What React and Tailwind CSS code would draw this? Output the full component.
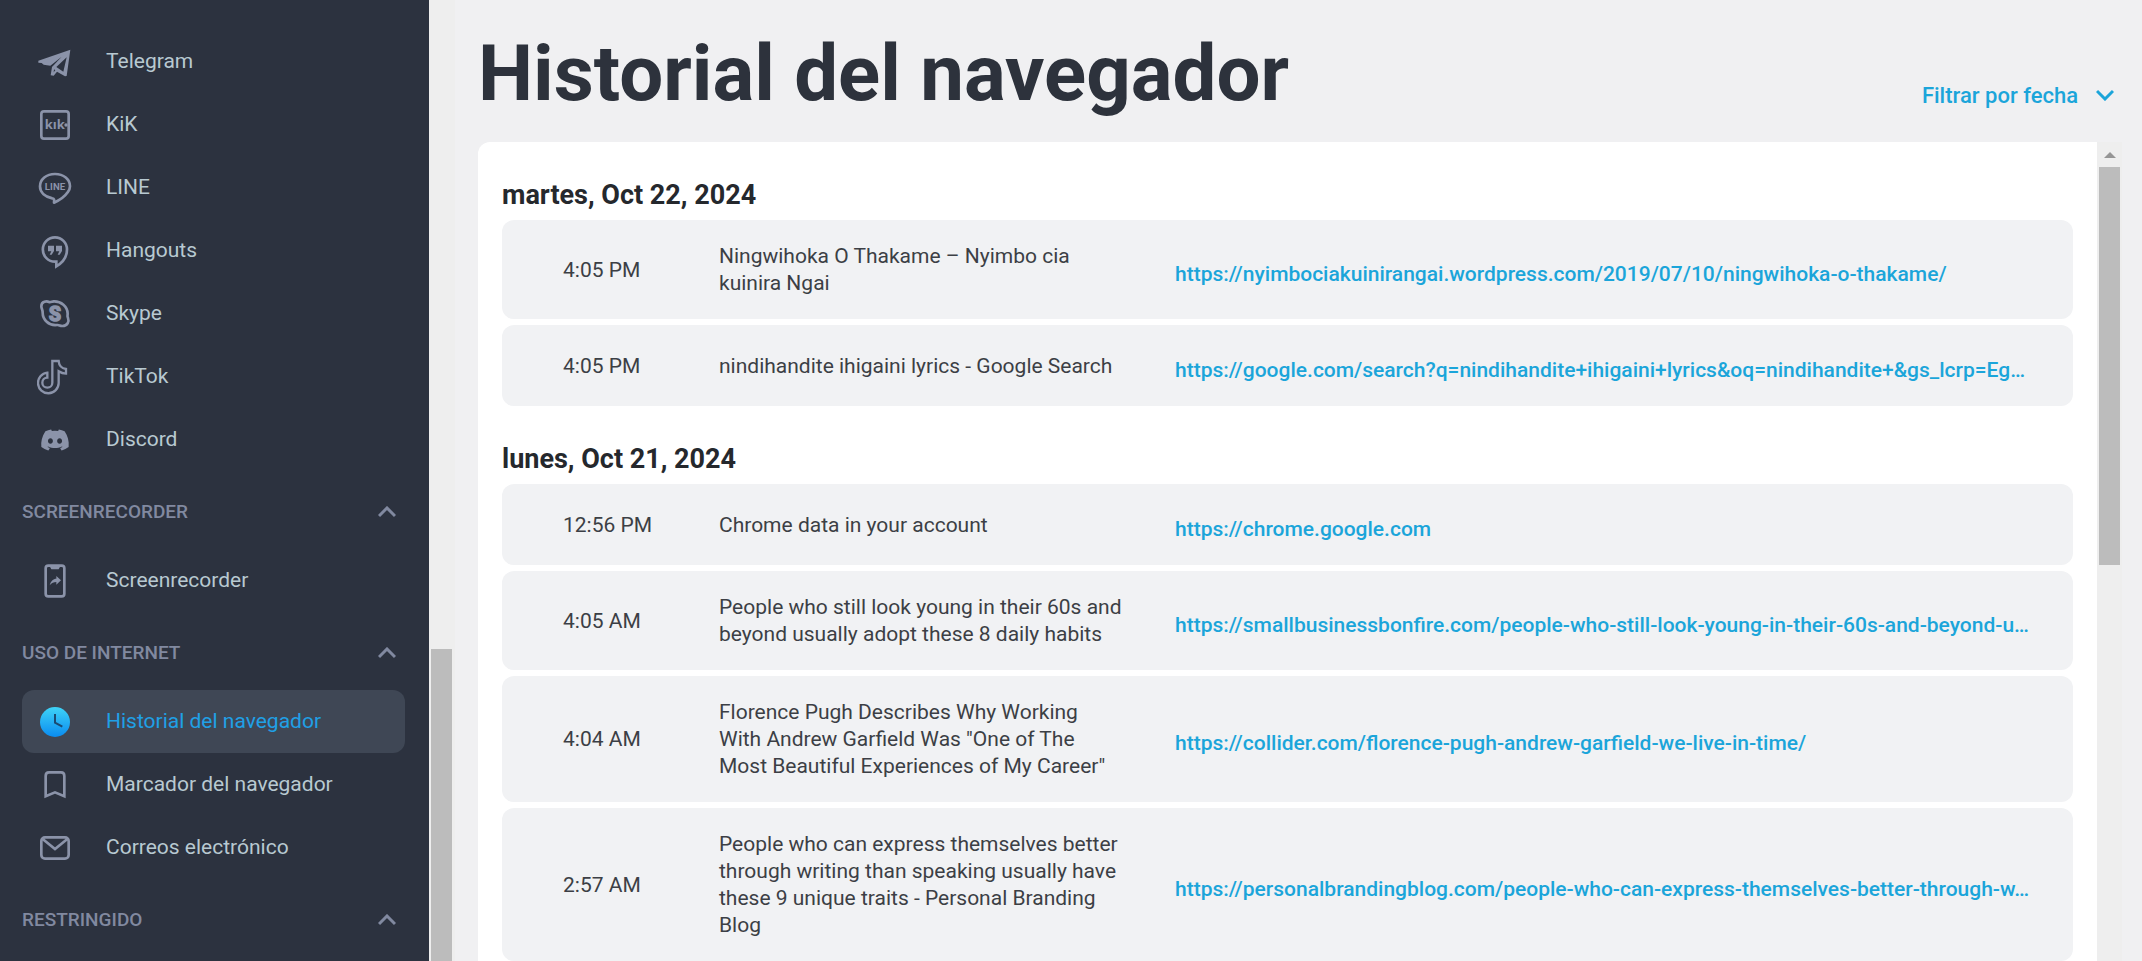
import React from "react";
import { FaDiscord } from "react-icons/fa";

const line = { fill: "none", stroke: "currentColor" };

function Glyph({ children }) {
  return (
    <svg viewBox="0 0 108 108" className="size-9 shrink-0" aria-hidden="true">
      {children}
    </svg>
  );
}

const icons = {
  telegram: (
    <Glyph>
      <path
        fill="currentColor"
        fillRule="evenodd"
        d="M100 17 4 50l0 6 10 1 6 5 20 3L74 38 45 69l-4 25 9 1 10-12 24 14 5-1zM89 40 79 83 58 69z"
      />
      <path fill="#2c323f" d="m51 76 4 3-5 6z" />
    </Glyph>
  ),
  kik: (
    <Glyph>
      <rect x="13" y="13" width="82" height="82" rx="8" strokeWidth="8" {...line} />
      <text x="23" y="67" fill="currentColor" fontFamily="Open Sans, sans-serif" fontWeight="700" fontSize="39">
        kık
      </text>
      <circle cx="87" cy="54" r="5" fill="currentColor" />
    </Glyph>
  ),
  line: (
    <Glyph>
      <path
        strokeWidth="8"
        strokeLinejoin="round"
        {...line}
        d="M54 12c-26 0-45 16-45 37 0 19 16 32 37 36 6 1 6 3 5 13 14-6 33-19 41-31 5-6 7-12 7-18 0-21-19-37-45-37z"
      />
      <text x="54" y="60" textAnchor="middle" fill="currentColor" fontFamily="Roboto, sans-serif" fontWeight="700" fontSize="29">
        LINE
      </text>
    </Glyph>
  ),
  hangouts: (
    <Glyph>
      <path
        strokeWidth="8"
        {...line}
        d="M54 13a36 36 0 0 0 0 73h4v14c19-11 32-29 32-51a36 36 0 0 0-36-36z"
      />
      <path fill="currentColor" d="M33 38h18v16l-7 11h-6l5-10H33zM57 38h18v16l-7 11h-6l5-10H57z" />
    </Glyph>
  ),
  skype: (
    <Glyph>
      <path
        strokeWidth="8"
        {...line}
        d="M36 18c-6-3-23-3-23 13 0 7 4 10 4 19 0 20 18 40 43 37 7-1 8 3 16 3 16 0 21-14 17-24-3-6-1-7-1-13 0-21-20-38-42-37-6 1-10 4-14 2z"
      />
      <text x="54" y="74" textAnchor="middle" fill="currentColor" stroke="currentColor" strokeWidth="5" fontFamily="Roboto, sans-serif" fontWeight="700" fontSize="58">
        S
      </text>
    </Glyph>
  ),
  tiktok: (
    <Glyph>
      <path
        strokeWidth="7"
        {...line}
        d="M46 6h19c1 14 9 22 22 24v14c-9 0-16-3-22-7v35a31 31 0 1 1-34-31v15a15 15 0 1 0 15 15z"
      />
    </Glyph>
  ),
  discord: (
    <span className="flex size-9 shrink-0 items-center justify-center">
      <FaDiscord className="size-[30px]" aria-hidden="true" />
    </span>
  ),
  recorder: (
    <Glyph>
      <rect x="26" y="8" width="56" height="92" rx="8" strokeWidth="8" {...line} />
      <path fill="currentColor" d="M38 10h32l-5 9H43zM38 67c3-13 11-20 20-20v-8l14 13-14 13v-8c-8 0-14 3-20 10z" />
    </Glyph>
  ),
  bookmark: (
    <Glyph>
      <path strokeWidth="8" {...line} d="M26 88V27c0-8 3-11 10-11h36c7 0 10 3 10 11v61L54 76z" />
    </Glyph>
  ),
  mail: (
    <Glyph>
      <rect x="13" y="22" width="82" height="64" rx="11" strokeWidth="8" {...line} />
      <path strokeWidth="8" {...line} d="m16 26 38 31 38-31" />
    </Glyph>
  ),
  clock: (
    <Glyph>
      <defs>
        <linearGradient id="clock-fill" x1="0" y1="0" x2="0" y2="1">
          <stop offset="0" stopColor="#3fd3f7" />
          <stop offset="1" stopColor="#0a8cf0" />
        </linearGradient>
      </defs>
      <circle cx="54" cy="54" r="45" fill="url(#clock-fill)" />
      <path d="M54 30v26l22 12" fill="none" stroke="#1b4a72" strokeWidth="6" />
    </Glyph>
  ),
};

const sections = [
  {
    items: [
      ["telegram", "Telegram"],
      ["kik", "KiK"],
      ["line", "LINE"],
      ["hangouts", "Hangouts"],
      ["skype", "Skype"],
      ["tiktok", "TikTok"],
      ["discord", "Discord"],
    ],
  },
  { title: "SCREENRECORDER", items: [["recorder", "Screenrecorder"]] },
  {
    title: "USO DE INTERNET",
    items: [
      ["clock", "Historial del navegador"],
      ["bookmark", "Marcador del navegador"],
      ["mail", "Correos electrónico"],
    ],
  },
  { title: "RESTRINGIDO", items: [] },
];

const days = [
  {
    date: "martes, Oct 22, 2024",
    visits: [
      ["4:05 PM", "Ningwihoka O Thakame – Nyimbo cia kuinira Ngai", "https://nyimbociakuinirangai.wordpress.com/2019/07/10/ningwihoka-o-thakame/"],
      ["4:05 PM", "nindihandite ihigaini lyrics - Google Search", "https://google.com/search?q=nindihandite+ihigaini+lyrics&oq=nindihandite+&gs_lcrp=Eg…"],
    ],
  },
  {
    date: "lunes, Oct 21, 2024",
    visits: [
      ["12:56 PM", "Chrome data in your account", "https://chrome.google.com"],
      ["4:05 AM", "People who still look young in their 60s and beyond usually adopt these 8 daily habits", "https://smallbusinessbonfire.com/people-who-still-look-young-in-their-60s-and-beyond-u…"],
      ["4:04 AM", 'Florence Pugh Describes Why Working With Andrew Garfield Was "One of The Most Beautiful Experiences of My Career"', "https://collider.com/florence-pugh-andrew-garfield-we-live-in-time/"],
      ["2:57 AM", "People who can express themselves better through writing than speaking usually have these 9 unique traits - Personal Branding Blog", "https://personalbrandingblog.com/people-who-can-express-themselves-better-through-w…"],
    ],
  },
];

function Chevron({ up }) {
  return (
    <svg viewBox="0 0 18 12" className="h-3 w-[18px] shrink-0" fill="none" stroke="currentColor" strokeWidth="3" aria-hidden="true">
      <path d={up ? "m1 10 8-8 8 8" : "m1 2 8 8 8-8"} />
    </svg>
  );
}

function NavItem({ icon, label }) {
  const active = icon === "clock";
  return (
    <li>
      <a
        href="#"
        aria-current={active ? "page" : undefined}
        className={
          active
            ? "flex h-[63px] items-center gap-[33px] rounded-xl bg-[#3f4755] pl-[15px] text-[#8b93a9]"
            : "flex h-[63px] items-center gap-[33px] rounded-xl pl-[15px] text-[#8b93a9]"
        }
      >
        {icons[icon]}
        <span className={active ? "text-[21px] text-[#20a0e6]" : "text-[21px] text-[#b8c9d1]"}>{label}</span>
      </a>
    </li>
  );
}

function Sidebar() {
  return (
    <nav className="w-[429px] shrink-0 overflow-hidden bg-[#2c323f] pr-6 pl-[22px] pt-[30px]">
      {sections.map(({ title, items }) => (
        <section key={title ?? "apps"}>
          {title && (
            <button
              type="button"
              aria-expanded="true"
              className="flex h-[78px] w-full items-center justify-between pt-1 pr-[9px] text-[19px] font-medium text-[#8189a0]"
            >
              {title}
              <Chevron up />
            </button>
          )}
          <ul>
            {items.map(([icon, label]) => (
              <NavItem key={label} icon={icon} label={label} />
            ))}
          </ul>
        </section>
      ))}
    </nav>
  );
}

function Visit({ time, title, url }) {
  return (
    <li className="flex min-h-[81px] items-center rounded-xl bg-[#f1f2f4] pt-[23px] pr-5 pb-[22px] pl-[61px] text-[21px] leading-[27px] text-[#3c3f45]">
      <time className="w-[156px] shrink-0">{time}</time>
      <p className="w-[404px] shrink-0">{title}</p>
      <a href={url} className="ml-[52px] min-w-0 flex-1 truncate pt-2 font-medium text-[#1ba5da]">
        {url}
      </a>
    </li>
  );
}

export default function App() {
  return (
    <div className="flex h-screen overflow-hidden bg-[#f0f0f2] font-['Roboto',sans-serif]">
      <Sidebar />
      <div className="flex w-[26px] shrink-0 flex-col justify-end bg-[#eeeeee] pl-[2px]" aria-hidden="true">
        <div className="h-[312px] w-[21px] bg-[#bcbcbc]" />
      </div>
      <main className="flex min-w-0 flex-1 flex-col pl-[23px]">
        <header className="flex h-[142px] shrink-0 items-center justify-between pt-1 pr-7">
          <h1 className="text-[78px] font-bold text-[#2d323c]">Historial del navegador</h1>
          <button type="button" aria-haspopup="true" className="mt-11 flex items-center gap-[18px] text-[22px] font-medium text-[#1ba5da]">
            Filtrar por fecha
            <Chevron />
          </button>
        </header>
        <div className="flex min-h-0 flex-1 pr-5">
          <div className="min-w-0 flex-1 overflow-hidden rounded-tl-xl bg-white px-6">
            {days.map(({ date, visits }) => (
              <section key={date}>
                <h2 className="pt-9 pb-2 text-[27px] leading-[34px] font-bold text-[#25282d]">{date}</h2>
                <ul className="flex flex-col gap-1.5">
                  {visits.map(([time, title, url]) => (
                    <Visit key={url} time={time} title={title} url={url} />
                  ))}
                </ul>
              </section>
            ))}
          </div>
          <div className="flex w-[25px] shrink-0 flex-col bg-[#eeeeee] pl-[2px]" aria-hidden="true">
            <div className="flex h-[25px] w-[21px] items-center justify-center">
              <svg viewBox="0 0 12 6" className="h-1.5 w-3" fill="#959595">
                <path d="M0 6 6 0l6 6z" />
              </svg>
            </div>
            <div className="h-[398px] w-[21px] bg-[#bcbcbc]" />
          </div>
        </div>
      </main>
    </div>
  );
}
